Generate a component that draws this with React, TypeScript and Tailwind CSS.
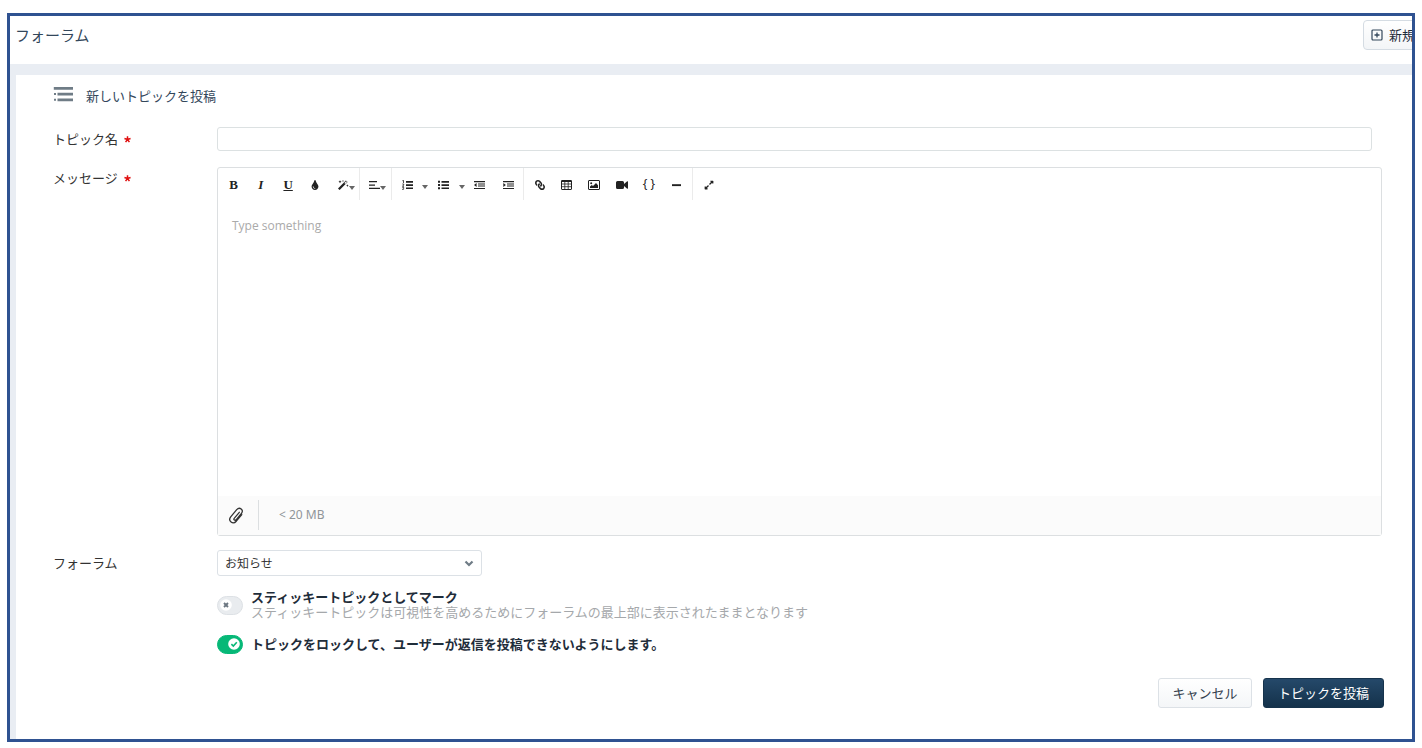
import { useState } from "react";
import type { ReactNode } from "react";
import { FaExpandAlt, FaLink, FaTint } from "react-icons/fa";

function Caret() {
  return (
    <svg viewBox="0 0 6 4" className="h-1 w-1.5 shrink-0" fill="#666">
      <path d="M0 0h6L3 4z" />
    </svg>
  );
}

function LineIcon({ d, children }: { d: string; children?: ReactNode }) {
  return (
    <svg viewBox="0 0 11 10" className="h-2.5 w-[11px] shrink-0" fill="#222">
      <path d={d} />
      {children}
    </svg>
  );
}

function MagicIcon() {
  return (
    <svg viewBox="0 0 11 10" className="h-2.5 w-[11px] shrink-0" fill="#222">
      <path d="M0 8.6 7.9.4l1.7 1.5L1.6 10z" />
      <path d="m6.4 2.9 1 1L9 2.1l-.9-.8z" fill="#fff" />
      <path d="M2 .3l.5 1 1 .5-1 .5-.5 1-.5-1-1-.5 1-.5zM5 0l.3.7.7.3-.7.3L5 2l-.3-.7L4 1l.7-.3zM9.4 4.3l.4.9.9.4-.9.4-.4.9-.4-.9-.9-.4.9-.4z" />
    </svg>
  );
}

function TableIcon() {
  return (
    <svg viewBox="0 0 11 10" className="h-2.5 w-[11px]" fill="none" stroke="#222">
      <rect x="0.5" y="0.5" width="10" height="9" rx="0.5" />
      <path d="M0.5 1.2h10" strokeWidth="1.6" />
      <path d="M0.5 4h10M0.5 6.7h10M3.8 1v8.5M7.2 1v8.5" strokeWidth="0.8" />
    </svg>
  );
}

function PictureIcon() {
  return (
    <svg viewBox="0 0 12 10" className="h-2.5 w-3">
      <rect x="0.5" y="0.5" width="11" height="9" rx="0.5" fill="none" stroke="#222" />
      <circle cx="3.2" cy="3.2" r="1" fill="#222" />
      <path d="M2 8V6.6l1.8-1.7 1.2 1.1L8 3l2 2.2V8z" fill="#222" />
    </svg>
  );
}

function VideoIcon() {
  return (
    <svg viewBox="0 0 12 8" className="h-2 w-3" fill="#222">
      <path d="M1.5 0h5A1.5 1.5 0 0 1 8 1.5V3l3.2-2.8L12 .6v6.8l-.8.4L8 5v1.5A1.5 1.5 0 0 1 6.500 8h-5A1.5 1.500 0 0 1 0 6.500v-5A1.500 1.500 0 0 1 1.500 0z" />
    </svg>
  );
}

function ListHeadingIcon() {
  return (
    <svg viewBox="0 0 20 16" className="h-4 w-5" fill="#6f7c86">
      <path d="M.8 1H20v2.800H.8zM1 7h2v2H1zM4.500 6.700H20v2.800H4.500zM1 12.700h2v2H1zM4.500 12.400H20v2.800H4.500z" />
    </svg>
  );
}

function ClipIcon() {
  return (
    <svg
      viewBox="0 0 16 18"
      className="h-[18px] w-4"
      fill="none"
      stroke="#333"
      strokeWidth="1.3"
      strokeLinecap="round"
      strokeLinejoin="round"
    >
      <path d="M11.300 6.300 6.200 12.300c-1 1.300.8 2.700 1.900 1.500l5.300-6.300c2.700-3.600-1.700-7.100-4.700-3.900l-6 7.200c-3.100 4.200 2.200 8.200 5.600 4.400l5.500-6.500" />
    </svg>
  );
}

function Tool({ label, className, children }: { label: string; className: string; children: ReactNode }) {
  return (
    <button
      type="button"
      aria-label={label}
      className={`flex h-8 items-center justify-center pt-0.5 text-[12px] text-[#222] ${className}`}
    >
      {children}
    </button>
  );
}

const groupLine = "flex h-8 items-center border-r border-[#ebebeb]";
const serif = "font-['Liberation_Serif',serif] text-[13px]";

function Toolbar() {
  return (
    <div className="flex h-8 items-center">
      <div className={`${groupLine} w-[142px] pl-0.5`}>
        <Tool label="太字" className="flex-1"><span className={`${serif} font-bold`}>B</span></Tool>
        <Tool label="斜体" className="flex-1"><span className={`${serif} font-bold italic`}>I</span></Tool>
        <Tool label="下線" className="flex-1"><span className={`${serif} font-bold underline underline-offset-1`}>U</span></Tool>
        <Tool label="文字色" className="flex-1"><FaTint className="size-2.5" /></Tool>
        <Tool label="スタイル" className="w-[30px] pl-1"><MagicIcon /><span className="pt-1.5"><Caret /></span></Tool>
      </div>
      <div className={`${groupLine} w-8`}>
        <Tool label="配置" className="w-8 pl-1">
          <LineIcon d="M0 1h8v1.300H0zM0 4.400h6v1.300H0zM0 7.800h11v1.300H0z" />
          <span className="pt-1.5"><Caret /></span>
        </Tool>
      </div>
      <div className={`${groupLine} w-[132px]`}>
        <Tool label="番号付きリスト" className="w-[30px]">
          <LineIcon d="M4 1h7v1.700H4zM4 4.200h7v1.700H4zM4 7.400h7v1.700H4z">
            <path d="M.4.7 1.500.3V3M.3 4h1.400v1L.4 6.300h1.600M.3 7.400h1.500L1.200 8.300q.9.200.4 1-.5.500-1.400.100" fill="none" stroke="#222" strokeWidth="0.8" />
          </LineIcon>
        </Tool>
        <Tool label="番号の種類" className="w-1.5 pt-1.5"><Caret /></Tool>
        <Tool label="箇条書き" className="w-[31px]">
          <LineIcon d="M0 .8h2v2H0zM3.500 1H11v1.700H3.500zM0 4h2v2H0zM3.500 4.200H11v1.700H3.500zM0 7.200h2v2H0zM3.500 7.400H11v1.700H3.500z" />
        </Tool>
        <Tool label="箇条書きの種類" className="w-1.5 pt-1.5"><Caret /></Tool>
        <Tool label="インデント解除" className="flex-1">
          <LineIcon d="M0 1h11v1.200H0zM4 3.400h7v1H4zM4 5.600h7v1H4zM0 7.900h11v1.200H0zM0 5l2.600-2v4z" />
        </Tool>
        <Tool label="インデント" className="flex-1">
          <LineIcon d="M0 1h11v1.200H0zM4 3.400h7v1H4zM4 5.600h7v1H4zM0 7.900h11v1.200H0zM2.900 5 .3 3v4z" />
        </Tool>
      </div>
      <div className={`${groupLine} w-[169px] px-0.5`}>
        <Tool label="リンク" className="flex-1"><FaLink className="size-2.5 -scale-x-100" /></Tool>
        <Tool label="表" className="flex-1"><TableIcon /></Tool>
        <Tool label="画像" className="flex-1"><PictureIcon /></Tool>
        <Tool label="動画" className="flex-1"><VideoIcon /></Tool>
        <Tool label="コード" className="flex-1"><span className="pb-0.5 whitespace-nowrap">{"{ }"}</span></Tool>
        <Tool label="水平線" className="flex-1"><LineIcon d="M1 4.200h9v1.900H1z" /></Tool>
      </div>
      <Tool label="全画面" className="w-8"><FaExpandAlt className="size-2.5" /></Tool>
    </div>
  );
}

function Required() {
  return (
    <svg viewBox="0 0 8 8" className="size-[7px]" stroke="#e01010" strokeWidth="1.7" role="img" aria-label="必須">
      <path d="M4 4V.4M4 4 .5 2.900M4 4l3.500-1.100M4 4 1.800 7M4 4l2.200 3" />
    </svg>
  );
}

function Toggle({ id, initial }: { id: string; initial: boolean }) {
  const [on, setOn] = useState(initial);
  return (
    <span className="grid h-[19px] w-[26px] shrink-0">
      <input
        id={id}
        type="checkbox"
        checked={on}
        onChange={() => setOn(!on)}
        className={`col-start-1 row-start-1 h-[19px] w-[26px] appearance-none rounded-full border ${
          on ? "border-[#06b877] bg-[#06b877]" : "border-[#dde1e5] bg-[#e9ecef]"
        }`}
      />
      <span
        className={`pointer-events-none col-start-1 row-start-1 flex items-center px-[3px] ${
          on ? "justify-end" : "justify-start"
        }`}
      >
        <svg viewBox="0 0 12 12" className="size-3" fill="none">
          <circle cx="6" cy="6" r="5.800" fill="#fff" />
          {on ? (
            <path d="m3.400 6.200 1.900 1.800 3.500-3.700" stroke="#06b877" strokeWidth="1.600" />
          ) : (
            <path d="m4 4 4 4M8 4 4 8" stroke="#6b7680" strokeWidth="1.900" />
          )}
        </svg>
      </span>
    </span>
  );
}

export default function App() {
  return (
    <div className="flex min-h-screen flex-col bg-white px-[7px] pt-[13px] pb-1.5 font-['Noto_Sans','Noto_Sans_CJK_JP',sans-serif] text-[13px] leading-5 text-[#333]">
      <div className="flex flex-1 flex-col border-3 border-[#2f5291] bg-[#e9edf3]">
        <header className="flex h-12 items-start justify-between bg-white">
          <h1 className="pt-[7px] pl-[5px] text-[15px] leading-6 text-[#33475b]">フォーラム</h1>
          <div className="flex w-[49px] shrink-0 overflow-hidden pt-1">
            <button
              type="button"
              className="flex h-[30px] shrink-0 items-center gap-1.5 rounded border border-[#d5dce3] bg-linear-to-b from-white to-[#f3f5f7] px-[7px] whitespace-nowrap text-[#1f2d3a]"
            >
              <svg viewBox="0 0 12 12" className="size-3" fill="none" stroke="#33475b">
                <rect x="1" y="1" width="10" height="10" rx="1" strokeWidth="1.200" />
                <path d="M6 3.500v5M3.500 6h5" strokeWidth="1.300" />
              </svg>
              新規
            </button>
          </div>
        </header>

        <main className="mt-[11px] ml-1.5 flex-1 bg-white pl-[37px]">
          <form onSubmit={(e) => e.preventDefault()} className="pr-[30px]">
            <div className="flex items-start gap-[13px] pt-[11px]">
              <ListHeadingIcon />
              <h2 className="text-[#33475b]">新しいトピックを投稿</h2>
            </div>

            <div className="mt-[21px] flex items-center pr-2.5">
              <label htmlFor="topic" className="flex w-[164px] shrink-0 items-center gap-1.5">
                トピック名 <Required />
              </label>
              <input
                id="topic"
                type="text"
                className="h-6 min-w-0 flex-1 rounded-[3px] border border-[#dce1e2] px-2 outline-none"
              />
            </div>

            <div className="mt-4 flex items-start">
              <label htmlFor="message" className="flex w-[164px] shrink-0 items-center gap-1.5 pt-px">
                メッセージ <Required />
              </label>
              <div className="min-w-0 flex-1 rounded-[3px] border border-[#dcdfe1]">
                <Toolbar />
                <textarea
                  id="message"
                  placeholder="Type something"
                  className="block h-[296px] w-full resize-none px-3.5 pt-4 font-['Open_Sans','Noto_Sans_CJK_JP',sans-serif] text-[12px] leading-5 outline-none placeholder:text-[#aaa]"
                />
                <div className="flex h-[39px] items-center bg-[#fbfbfb] pb-0.5">
                  <button type="button" aria-label="ファイルを添付" className="flex h-[30px] w-[41px] items-center justify-center border-r border-[#dcdfe1] pr-1">
                    <ClipIcon />
                  </button>
                  <span className="pl-5 text-[12px] text-[#909599]">&lt; 20 MB</span>
                </div>
              </div>
            </div>

            <div className="mt-[14px] flex items-center">
              <label htmlFor="forum" className="w-[164px] shrink-0">フォーラム</label>
              <div className="grid w-[265px] items-center">
                <select
                  id="forum"
                  className="col-start-1 row-start-1 h-[26px] appearance-none rounded-[3px] border border-[#dce1e6] bg-white px-[7px] pt-0.5 text-[12px] text-[#333]"
                >
                  <option>お知らせ</option>
                </select>
                <svg viewBox="0 0 10 8" className="pointer-events-none col-start-1 row-start-1 mr-2 h-2 w-2.5 justify-self-end" fill="none" stroke="#6f7c86" strokeWidth="2.200">
                  <path d="m1.500 2.500 3.500 3.500 3.500-3.500" />
                </svg>
              </div>
            </div>

            <div className="mt-[14px] ml-[164px] flex items-center gap-2">
              <Toggle id="sticky" initial={false} />
              <label htmlFor="sticky" className="leading-[15px]">
                <span className="block font-bold text-[#1f2d3a]">スティッキートピックとしてマーク</span>
                <span className="block text-[#a5a8ab]">
                  スティッキートピックは可視性を高めるためにフォーラムの最上部に表示されたままとなります
                </span>
              </label>
            </div>

            <div className="mt-[14px] ml-[164px] flex items-center gap-2">
              <Toggle id="lock" initial={true} />
              <label htmlFor="lock" className="font-bold text-[#1f2d3a]">
                トピックをロックして、ユーザーが返信を投稿できないようにします。
              </label>
            </div>

            <div className="-mr-0.5 mt-6 mb-6 flex justify-end gap-[11px]">
              <button
                type="button"
                className="h-[30px] w-[94px] rounded-[3px] border border-[#dce1e6] bg-linear-to-b from-white to-[#f4f6f8] text-[#33404d]"
              >
                キャンセル
              </button>
              <button
                type="submit"
                className="h-[30px] w-[121px] rounded-[3px] border border-[#16334c] bg-linear-to-b from-[#25496a] to-[#14324b] text-white"
              >
                トピックを投稿
              </button>
            </div>
          </form>
        </main>
      </div>
    </div>
  );
}
